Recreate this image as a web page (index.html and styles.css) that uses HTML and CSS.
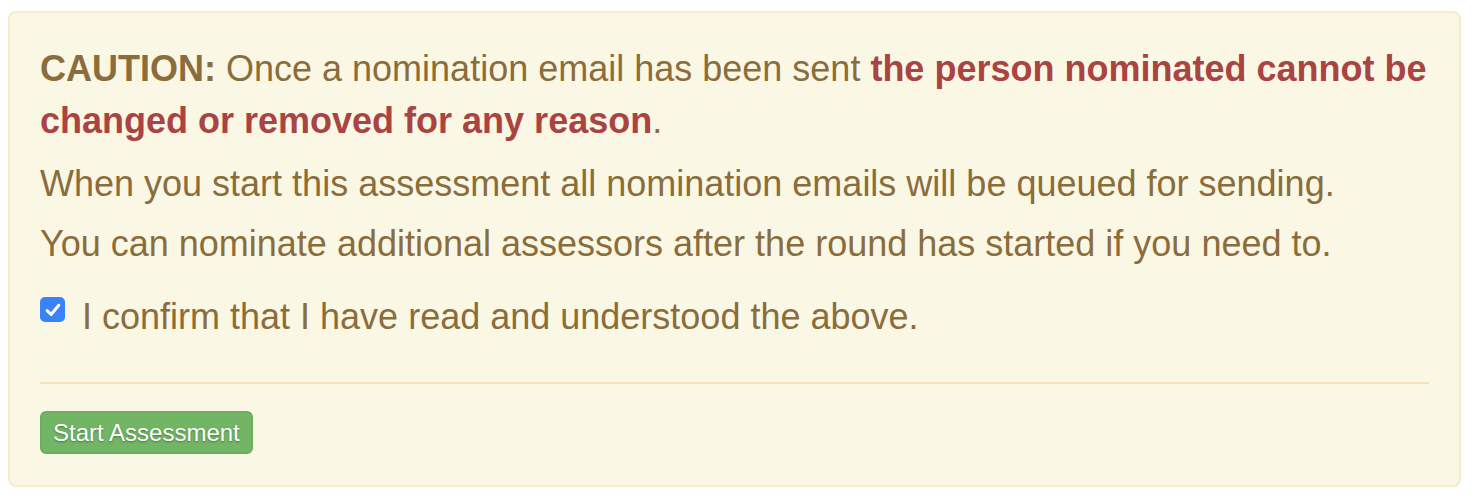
FILE: index.html
```html
<!DOCTYPE html>
<html>
<head>
<meta charset="utf-8">
<link rel="stylesheet" href="styles.css">
</head>
<body>
<div class="alert">
  <p class="p-first"><strong>CAUTION:</strong> Once a nomination email has been sent <strong class="danger">the person nominated cannot be changed or removed for any reason</strong>.</p>
  <p>When you start this assessment all nomination emails will be queued for sending.</p>
  <p>You can nominate additional assessors after the round has started if you need to.</p>
  <label class="confirm">
    <span class="check"><svg width="20" height="20" viewBox="0 0 16 16"><path d="M3.3 8.5 L6.5 11.6 L12.6 4.2" fill="none" stroke="#fff" stroke-width="2.4" stroke-linecap="round" stroke-linejoin="round"/></svg></span>
    <span>I confirm that I have read and understood the above.</span>
  </label>
  <hr class="divider">
  <button class="btn">Start Assessment</button>
</div>
</body>
</html>
```
FILE: styles.css
```css
html, body {
  margin: 0;
  padding: 0;
  background: #ffffff;
}
body {
  padding: 11px 15px 0 8px;
  font-family: "Liberation Sans", Arial, sans-serif;
}
.alert {
  background: #fbf7e5;
  border: 2px solid #f8ebcd;
  border-radius: 8px;
  color: #8a6d3b;
  padding: 30px 30px 31px 30px;
  font-size: 36px;
  line-height: 52px;
}
.alert p {
  margin: 0 0 8px 0;
}
.alert .p-first {
  margin-bottom: 11px;
}
.alert strong {
  font-weight: bold;
}
.danger {
  color: #a94442;
}
.confirm {
  display: flex;
  align-items: flex-start;
  gap: 17px;
  margin-top: 21px;
  line-height: 52px;
}
.check {
  width: 25px;
  height: 25px;
  margin-top: 6px;
  border-radius: 5px;
  background: #3a82f7;
  display: flex;
  align-items: center;
  justify-content: center;
  flex: none;
}
.check svg {
  display: block;
}
.divider {
  border: 0;
  border-top: 2px solid #f5e2b8;
  margin: 39px 0 27px 0;
}
.btn {
  display: block;
  font-family: "Liberation Sans", Arial, sans-serif;
  font-size: 24px;
  line-height: 27px;
  color: #fff;
  background: #71b565;
  border: 2px solid #6aae5e;
  border-radius: 6px;
  padding: 6px 11px;
  text-shadow: 0 1px 2px rgba(0,0,0,0.35);
  cursor: pointer;
}
```
